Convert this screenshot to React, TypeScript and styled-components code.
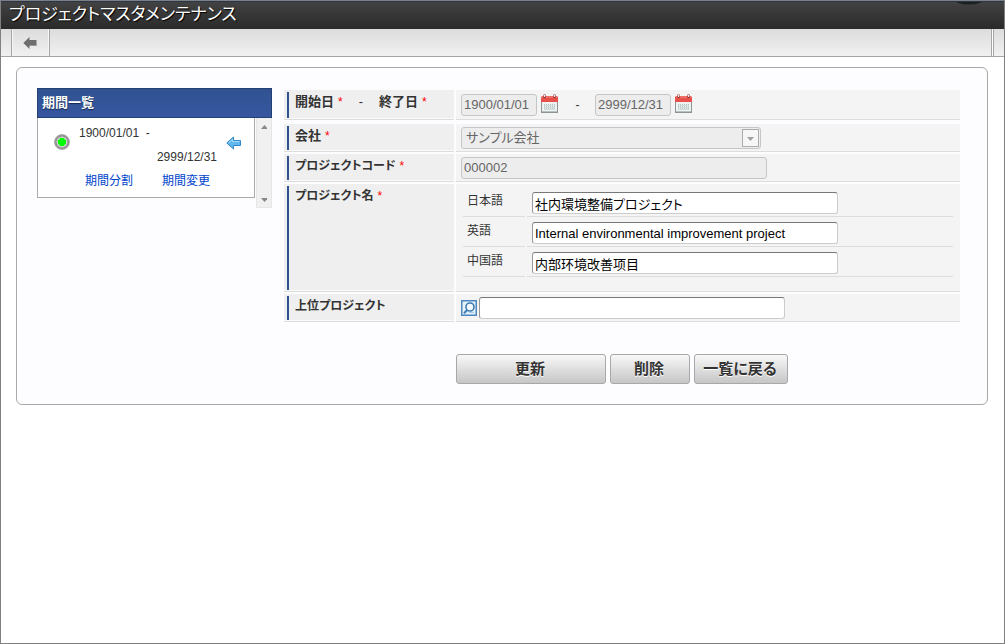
import React from "react";
import styled, { createGlobalStyle } from "styled-components";

const GlobalStyle = createGlobalStyle`
  *, *::before, *::after { box-sizing: border-box; }
  body {
    margin: 0;
    background: #fff;
    color: #333;
    font: 12px/20px "Liberation Sans", "Noto Sans CJK JP", sans-serif;
    font-feature-settings: "palt";
  }
  button, input, select { font: inherit; font-feature-settings: inherit; margin: 0; }
`;

const Frame = styled.div`
  min-height: 100vh;
  border: 1px solid #808080;
`;

const Header = styled.header`
  position: relative;
  height: 28px;
  padding: 0 8px;
  overflow: hidden;
  border-top: 1px solid #26374f;
  background: linear-gradient(#424242, #2a2a2a);
`;

const PageTitle = styled.h1`
  margin: 0;
  color: #fff;
  font-size: 17px;
  font-weight: 400;
  line-height: 26px;
  text-shadow: 1px 1px 1px #000;
  white-space: nowrap;
`;

const HeaderKnob = styled.svg`
  position: absolute;
  top: 0;
  right: 22px;
`;

const Toolbar = styled.nav`
  display: flex;
  justify-content: space-between;
  height: 28px;
  padding: 0 10px;
  border-bottom: 1px solid #a5a5a5;
  background: linear-gradient(#dcdcdc, #f1f1f1);
`;

const BackButton = styled.button`
  display: flex;
  align-items: center;
  justify-content: center;
  width: 39px;
  padding: 0 2px 0 0;
  border: 0;
  border-left: 1px solid #a5a5a5;
  border-right: 1px solid #a5a5a5;
  background: none;
  box-shadow: inset 1px 0 #f6f6f6, inset -1px 0 #f6f6f6;
`;

const ToolbarEnd = styled.div`
  width: 3px;
  border-left: 1px solid #a5a5a5;
  border-right: 1px solid #a5a5a5;
  background: #fff;
`;

const Panel = styled.main`
  display: flex;
  align-items: flex-start;
  gap: 12px;
  margin: 10px 16px 10px 15px;
  padding: 20px 27px 20px 20px;
  border: 1px solid #aaa;
  border-radius: 6px;
  background: #fdfdff;
`;

const Periods = styled.aside`
  flex: none;
  width: 235px;
`;

const PeriodsTitle = styled.h2`
  margin: 0;
  padding: 0 4px;
  border: 1px solid #243f73;
  background: linear-gradient(#315291, #3657a0);
  color: #fff;
  font-size: 13px;
  line-height: 28px;
  text-shadow: 0 1px 1px #142850;
`;

const PeriodsBody = styled.div`
  display: flex;
  align-items: flex-start;
  gap: 1px;
`;

const PeriodList = styled.ul`
  flex: 1;
  margin: 0;
  padding: 0;
  list-style: none;
  border: 1px solid #aaa;
  border-top: 0;
  background: #fff;
`;

const PeriodItem = styled.li`
  display: flex;
  height: 79px;
  padding: 3px 13px 0 16px;
`;

const PeriodRadio = styled.input`
  appearance: none;
  flex: none;
  width: 16px;
  height: 16px;
  margin: 13px 9px 0 0;
  border: 1px solid #aaa;
  border-radius: 50%;
  background: #9a9a9a;

  &:checked {
    background: radial-gradient(circle, #0f0 4px, #d4e4d4 4px, #c4c8c4 5px, #8a8a8a 6px, #989898 7px);
  }
`;

const PeriodText = styled.div`
  flex: 1;
  line-height: 24px;
`;

const PeriodEnd = styled.div`
  text-align: right;
`;

const PeriodLinks = styled.div`
  display: flex;
  justify-content: space-between;
  padding: 0 7px 0 6px;
`;

const TextLink = styled.a`
  color: #04c;
  text-decoration: none;
`;

const IconButton = styled.button`
  display: flex;
  flex: none;
  padding: 0;
  border: 0;
  background: none;
`;

const ArrowButton = styled(IconButton)`
  align-self: flex-start;
  margin: 15px 0 0 9px;
`;

const ScrollRail = styled.div`
  display: flex;
  flex-direction: column;
  justify-content: space-between;
  width: 16px;
  height: 90px;
  padding: 7px 4px 5px;
  border: 1px solid #e6e6e6;
  border-top: 0;
  background: #f0f0f0;
`;

const Form = styled.form`
  flex: 1;
  padding-top: 2px;
`;

const Row = styled.div<{ $tail?: number }>`
  display: grid;
  grid-template-columns: 170px 1fr;
  column-gap: 2px;
  margin-bottom: ${(p) => p.$tail ?? 2}px;
`;

const LabelCell = styled.div`
  display: flex;
  padding: 2px 3px 1px;
  border-bottom: 1px solid #ddd;
  background: #efefef;
  box-shadow: inset 0 -1px #fafafa;
`;

const LabelBar = styled.div<{ $kana?: boolean }>`
  flex: 1;
  padding-left: 6px;
  border-left: 2px solid #315291;
  font-size: ${(p) => (p.$kana ? 12 : 13)}px;
  font-weight: 700;
  white-space: pre;
`;

const Star = styled.span`
  margin-left: 4px;
  color: #f00;
  font-size: 12px;
  font-weight: 400;
`;

const Dash = styled.span`
  margin: 0 16px;
  font-weight: 400;
`;

const ValueCell = styled.div<{ $tall?: boolean }>`
  display: flex;
  align-items: center;
  min-height: ${(p) => (p.$tall ? 30 : 28)}px;
  padding: 2px 5px;
  border-bottom: 1px solid #ddd;
  background: #f4f4f4;
`;

const TextInput = styled.input<{ $short?: boolean }>`
  width: ${(p) => (p.$short ? 76 : 306)}px;
  height: 22px;
  padding: 1px 2px;
  border: 1px solid #ccc;
  border-top-color: #777;
  border-left-color: #999;
  border-radius: 3px;
  background: #fff;
  color: #000;
  font-size: 13px;

  &:disabled {
    border-color: #c6c6c6;
    background: #ededed;
    color: #666;
  }
`;

const CalendarButton = styled(IconButton)`
  margin-left: 4px;
  padding-bottom: 2px;
`;

const RangeDash = styled.span`
  width: 37px;
  padding-left: 2px;
  text-align: center;
`;

const SelectWrap = styled.div`
  position: relative;
  display: flex;
  width: 300px;
`;

const Select = styled.select`
  appearance: none;
  width: 100%;
  height: 22px;
  padding: 0 24px 0 4px;
  border: 1px solid #c6c6c6;
  border-radius: 3px;
  background: #ededed;
  color: #666;
  font-size: 13px;
  opacity: 1;
`;

const SelectArrow = styled.svg`
  position: absolute;
  top: 2px;
  right: 1px;
  pointer-events: none;
`;

const NameCell = styled(ValueCell)`
  display: block;
  padding: 3px 7px 14px;
`;

const NameRow = styled.div`
  display: grid;
  grid-template-columns: 62px 1fr;
  column-gap: 2px;
  height: 30px;
`;

const NameLabel = styled.label`
  padding: 4px;
  border-bottom: 1px solid #ddd;
`;

const NameValue = styled.div`
  padding: 5px 4px 0 5px;
  border-bottom: 1px solid #ddd;
  line-height: 0;
`;

const SearchButton = styled(IconButton)`
  margin-right: 2px;
`;

const Actions = styled.div`
  display: flex;
  justify-content: center;
  gap: 4px;
  margin-top: 32px;
`;

const ActionButton = styled.button<{ $width: number }>`
  width: ${(p) => p.$width}px;
  height: 30px;
  padding: 0 2px 0 0;
  border: 1px solid #a8a8a8;
  border-radius: 3px;
  background: linear-gradient(#f8f8f8, #c6c6c6);
  color: #333;
  font-size: 15px;
  font-weight: 700;
  white-space: nowrap;
  text-shadow: 0 1px #fff;
`;

const CalendarIcon = () => (
  <svg width="17" height="19" viewBox="0 0 17 19" aria-hidden="true">
    <rect x="0.5" y="6.5" width="16" height="12" fill="#eef3f2" stroke="#8c9494" />
    <path d="M0 8V3.5Q0 2 1.5 2H15.5Q17 2 17 3.5V8Z" fill="#e8504c" />
    <path d="M1 3H16" stroke="#f58a80" />
    <path d="M3.5 0.5V4M13.5 0.5V4" stroke="#842c2c" strokeWidth="2" />
    <path d="M3.5 1V3M13.5 1V3" stroke="#eee" />
    <path
      d="M3 10.5H14M3 12.5H14M3 14.5H14"
      stroke="#b4c4c4"
      strokeDasharray="1 1"
    />
    <path d="M3 11.5H14M3 13.5H14M3 15.5H14" stroke="#d2dedd" />
    <path d="M1 17.5H16" stroke="#b9c0c0" />
  </svg>
);

const names = [
  { id: "name-ja", label: "日本語", value: "社内環境整備プロジェクト" },
  { id: "name-en", label: "英語", value: "Internal environmental improvement project" },
  { id: "name-zh", label: "中国語", value: "内部环境改善项目" },
];

export default function App() {
  return (
    <>
      <GlobalStyle />
      <Frame>
        <Header>
          <PageTitle>プロジェクトマスタメンテナンス</PageTitle>
          <HeaderKnob width="26" height="3" aria-hidden="true">
            <ellipse cx="13" cy="-3" rx="15" ry="5.5" fill="#1c201e" />
          </HeaderKnob>
        </Header>
        <Toolbar>
          <BackButton type="button" aria-label="戻る">
            <svg width="14" height="12" viewBox="0 0 14 12" aria-hidden="true">
              <path d="M0.3 6L6.5 0V3H13.5V9H6.5V12Z" fill="#6e6e6e" />
              <path d="M6.5 8.5H13.5" stroke="#999" />
            </svg>
          </BackButton>
          <ToolbarEnd />
        </Toolbar>
        <Panel>
          <Periods>
            <PeriodsTitle>期間一覧</PeriodsTitle>
            <PeriodsBody>
              <PeriodList>
                <PeriodItem>
                  <PeriodRadio type="radio" name="period" aria-label="1900/01/01 - 2999/12/31" defaultChecked />
                  <PeriodText>
                    <div>1900/01/01&nbsp; -</div>
                    <PeriodEnd>2999/12/31</PeriodEnd>
                    <PeriodLinks>
                      <TextLink href="#split">期間分割</TextLink>
                      <TextLink href="#change">期間変更</TextLink>
                    </PeriodLinks>
                  </PeriodText>
                  <ArrowButton type="button" aria-label="選択">
                    <svg width="15" height="14" viewBox="0 0 15 14" aria-hidden="true">
                      <path
                        d="M0.8 7L7.5 1V4.5H14.5V9.5H7.5V13Z"
                        fill="#62b8ee"
                        stroke="#3288cc"
                        strokeLinejoin="round"
                      />
                      <path d="M3 6.5L6.5 3.5V5.5H13.5" fill="none" stroke="#a6dcfa" />
                    </svg>
                  </ArrowButton>
                </PeriodItem>
              </PeriodList>
              <ScrollRail>
                <IconButton type="button" aria-label="上へ">
                  <svg width="7" height="4" aria-hidden="true">
                    <path d="M0 4L3.5 0L7 4Z" fill="#888" />
                  </svg>
                </IconButton>
                <IconButton type="button" aria-label="下へ">
                  <svg width="7" height="4" aria-hidden="true">
                    <path d="M0 0L3.5 4L7 0Z" fill="#888" />
                  </svg>
                </IconButton>
              </ScrollRail>
            </PeriodsBody>
          </Periods>
          <Form>
            <Row $tail={4}>
              <LabelCell>
                <LabelBar>
                  <label htmlFor="start">開始日</label>
                  <Star>*</Star>
                  <Dash>-</Dash>
                  <label htmlFor="end">終了日</label>
                  <Star>*</Star>
                </LabelBar>
              </LabelCell>
              <ValueCell $tall>
                <TextInput id="start" $short defaultValue="1900/01/01" disabled />
                <CalendarButton type="button" aria-label="開始日を選択">
                  <CalendarIcon />
                </CalendarButton>
                <RangeDash>-</RangeDash>
                <TextInput id="end" $short defaultValue="2999/12/31" disabled />
                <CalendarButton type="button" aria-label="終了日を選択">
                  <CalendarIcon />
                </CalendarButton>
              </ValueCell>
            </Row>
            <Row>
              <LabelCell>
                <LabelBar>
                  <label htmlFor="company">会社</label>
                  <Star>*</Star>
                </LabelBar>
              </LabelCell>
              <ValueCell>
                <SelectWrap>
                  <Select id="company" disabled>
                    <option>サンプル会社</option>
                  </Select>
                  <SelectArrow width="18" height="18" aria-hidden="true">
                    <rect x="0.5" y="0.5" width="16" height="17" fill="#f6f6f6" stroke="#a9adb0" />
                    <path d="M5 8H12L8.5 12Z" fill="#a0a0a0" />
                  </SelectArrow>
                </SelectWrap>
              </ValueCell>
            </Row>
            <Row>
              <LabelCell>
                <LabelBar $kana>
                  <label htmlFor="code">プロジェクトコード</label>
                  <Star>*</Star>
                </LabelBar>
              </LabelCell>
              <ValueCell>
                <TextInput id="code" defaultValue="000002" disabled />
              </ValueCell>
            </Row>
            <Row>
              <LabelCell>
                <LabelBar $kana>
                  プロジェクト名<Star>*</Star>
                </LabelBar>
              </LabelCell>
              <NameCell>
                {names.map((n) => (
                  <NameRow key={n.id}>
                    <NameLabel htmlFor={n.id}>{n.label}</NameLabel>
                    <NameValue>
                      <TextInput id={n.id} defaultValue={n.value} />
                    </NameValue>
                  </NameRow>
                ))}
              </NameCell>
            </Row>
            <Row $tail={0}>
              <LabelCell>
                <LabelBar $kana>
                  <label htmlFor="parent">上位プロジェクト</label>
                </LabelBar>
              </LabelCell>
              <ValueCell>
                <SearchButton type="button" aria-label="検索">
                  <svg width="16" height="16" viewBox="0 0 16 16" aria-hidden="true">
                    <rect x="0.75" y="0.75" width="14.5" height="14.5" fill="#e4f0fa" stroke="#4a88bd" strokeWidth="1.5" />
                    <circle cx="9" cy="7" r="4" fill="#f4faff" stroke="#3e7db4" strokeWidth="1.6" />
                    <path d="M6.2 10L3 13.200" stroke="#3e7db4" strokeWidth="2" />
                    <path d="M8 12.5H13" stroke="#a9cbe6" />
                  </svg>
                </SearchButton>
                <TextInput id="parent" />
              </ValueCell>
            </Row>
            <Actions>
              <ActionButton type="button" $width={150}>更新</ActionButton>
              <ActionButton type="button" $width={80}>削除</ActionButton>
              <ActionButton type="button" $width={94}>一覧に戻る</ActionButton>
            </Actions>
          </Form>
        </Panel>
      </Frame>
    </>
  );
}
